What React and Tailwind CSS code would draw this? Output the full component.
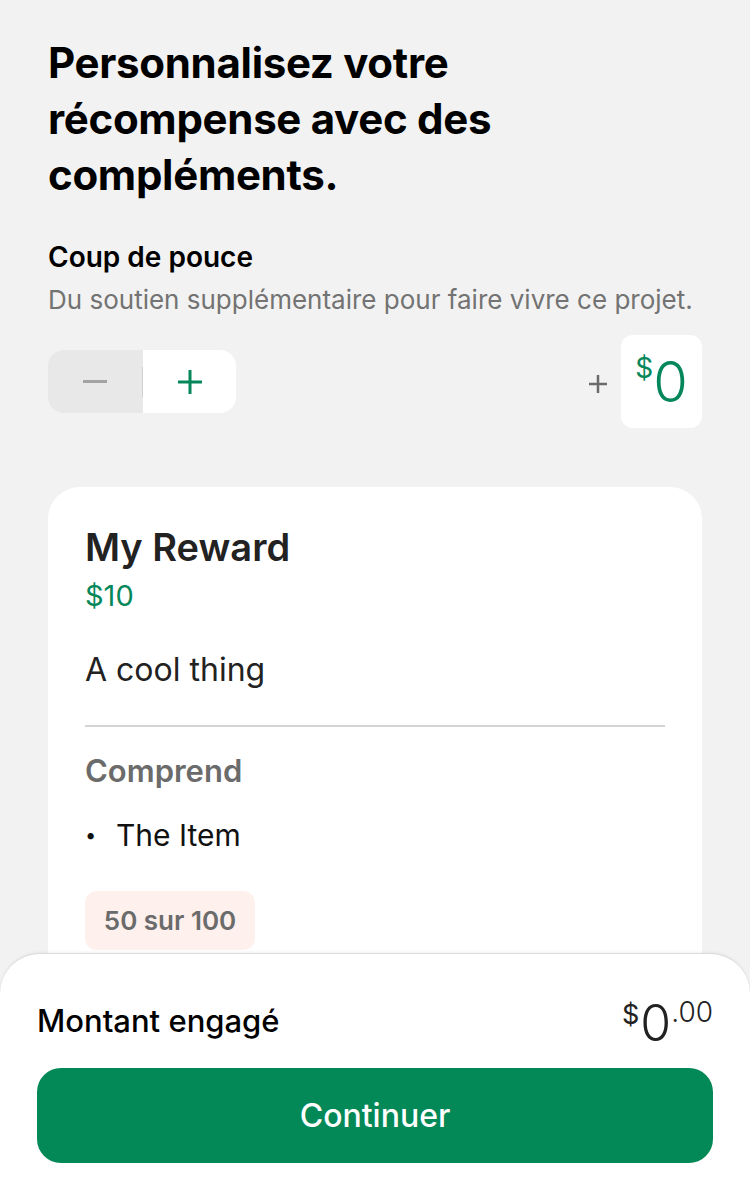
import React from 'react';

const font = { fontFamily: 'Inter, "Noto Sans", sans-serif' };

const Stepper = () => (
  <div className="flex h-[63px] w-[188px] overflow-hidden rounded-[16px]">
    <button className="flex w-[94px] items-center justify-center bg-[#e8e8e8]">
      <span className="block h-[3px] w-[24px] bg-[#a3a3a3]" />
    </button>
    <div className="flex items-center bg-[#e8e8e8]">
      <span className="block h-[30px] w-px bg-[#d0d0d0]" />
    </div>
    <button className="flex flex-1 items-center justify-center bg-white text-[#05875a]">
      <svg width="24" height="24" viewBox="0 0 24 24" stroke="currentColor" strokeWidth="3">
        <path d="M12 0v24M0 12h24" />
      </svg>
    </button>
  </div>
);

const Amount = () => (
  <div className="flex items-center gap-[14px]">
    <svg className="mt-[5px] text-[#6b6b6b]" width="18" height="18" viewBox="0 0 18 18" stroke="currentColor" strokeWidth="2.5">
      <path d="M9 0v18M0 9h18" />
    </svg>
    <div className="flex h-[93px] w-[81px] items-start justify-center rounded-[12px] bg-white pt-[19px] text-[#05875a]">
      <span className="text-[28px] leading-[28px]">$</span>
      <span className="text-[56px] font-light leading-[56px]">0</span>
    </div>
  </div>
);

const RewardCard = () => (
  <div className="mt-[59px] rounded-[32px] bg-white px-[37px] pb-[120px] pt-[37px]">
    <h2 className="text-[38px] font-semibold leading-[46px] text-[#222]">My Reward</h2>
    <p className="mt-[8px] text-[29px] leading-[36px] text-[#05875a]">$10</p>
    <p className="mt-[36px] text-[32px] leading-[40px] text-[#222]">A cool thing</p>
    <div className="mt-[35px] h-[2px] bg-[#d4d4d4]" />
    <h3 className="mt-[24px] text-[31px] font-semibold leading-[40px] text-[#6b6b6b]">Comprend</h3>
    <ul className="mt-[24px]">
      <li className="flex items-center text-[30px] leading-[40px] text-[#111]">
        <span className="w-[31px] text-[20px]">•</span>
        The Item
      </li>
    </ul>
    <div className="mt-[36px] inline-flex h-[59px] w-[170px] items-center justify-center rounded-[12px] bg-[#fef0ec] text-[26px] font-semibold text-[#6b6b6b]">
      50 sur 100
    </div>
  </div>
);

const BottomBar = () => (
  <div className="absolute bottom-0 left-0 right-0 h-[247px] rounded-t-[40px] border-t border-[#dcdcdc] bg-white px-[37px] pt-[42px] shadow-[0_-1px_3px_rgba(0,0,0,0.06)]">
    <div className="flex h-[48px] items-start justify-between">
      <span className="mt-[5px] text-[31px] font-medium leading-[40px] text-black">Montant engagé</span>
      <div className="flex items-start text-[#222]">
        <span className="mt-[5px] text-[27px] leading-[27px]">$</span>
        <span className="ml-[1px] mt-[2px] text-[50px] font-light leading-[50px]">0</span>
        <span className="mt-[2px] text-[28px] font-light leading-[28px]">.00</span>
      </div>
    </div>
    <button className="mt-[24px] flex h-[95px] w-full items-center justify-center rounded-[24px] bg-[#038857] text-[32px] font-medium text-white">
      Continuer
    </button>
  </div>
);

export default function App() {
  return (
    <div style={font} className="relative h-[1200px] w-[750px] overflow-hidden bg-[#f2f2f2]">
      <div className="px-[48px] pt-[35px]">
        <h1 className="text-[42px] font-bold leading-[56px] tracking-[-0.3px] text-black">
          Personnalisez votre<br />récompense avec des<br />compléments.
        </h1>
        <h2 className="mt-[36px] text-[28px] font-semibold leading-[36px] text-black">Coup de pouce</h2>
        <p className="mt-[8px] text-[26px] leading-[34px] text-[#737373]">
          Du soutien supplémentaire pour faire vivre ce projet.
        </p>
        <div className="mt-[18px] flex items-center justify-between">
          <Stepper />
          <Amount />
        </div>
        <RewardCard />
      </div>
      <BottomBar />
    </div>
  );
}
